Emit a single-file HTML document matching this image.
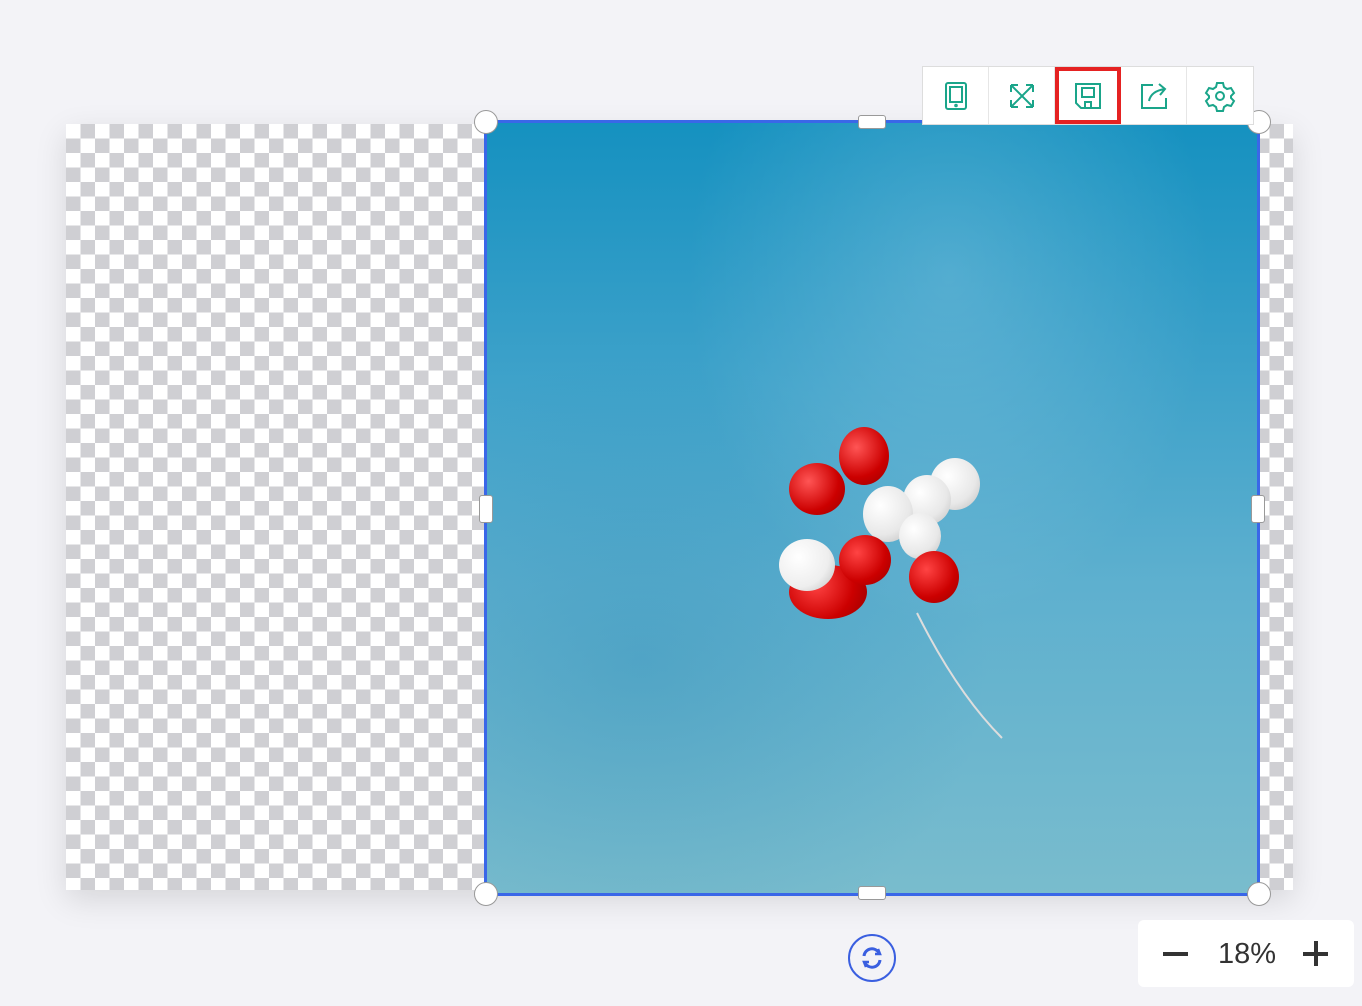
<!DOCTYPE html>
<html><head><meta charset="utf-8"><style>
body{margin:0;width:1362px;height:1006px;background:#f3f3f7;position:relative;overflow:hidden;font-family:"Liberation Sans",sans-serif}
.checker{position:absolute;left:66px;top:124px;width:1227px;height:766px;
background-color:#fff;background-image:linear-gradient(45deg,#cfcfd3 25%,transparent 25%,transparent 75%,#cfcfd3 75%),linear-gradient(45deg,#cfcfd3 25%,transparent 25%,transparent 75%,#cfcfd3 75%);
background-size:29px 29px;background-position:0 0,14.5px 14.5px;box-shadow:0 10px 30px rgba(0,0,0,.12)}
.img{position:absolute;left:484px;top:120px;width:770px;height:770px;border:3px solid #3a67e8;overflow:hidden;
background:linear-gradient(180deg,#1591c0 0%,#3aa0c9 30%,#5eb0cf 60%,#79bccd 100%)}
.h{position:absolute;background:#fff;border:1px solid #999;}
.c{width:22px;height:22px;border-radius:50%}
.tb{position:absolute;left:922px;top:66px;width:330px;height:57px;background:#fff;border:1px solid #ddd;display:flex}
.tb div{width:66px;height:57px;border-right:1px solid #e6e6e6;display:flex;align-items:center;justify-content:center;box-sizing:border-box}
.b{position:absolute;border-radius:50%}
</style></head><body>
<div class="checker"></div>
<div class="img">
<div style="position:absolute;left:0;top:0;width:100%;height:100%;background:radial-gradient(ellipse at 60% 20%,rgba(255,255,255,.18),transparent 40%),radial-gradient(ellipse at 20% 70%,rgba(20,120,170,.25),transparent 40%)"></div>
<svg width="770" height="770" style="position:absolute;left:0;top:0"><path d="M430 490 Q470 570 515 615" stroke="#ddd" stroke-width="2" fill="none"/></svg>
<div class="b" style="left:302px;top:340px;width:56px;height:52px;background:radial-gradient(circle at 35% 35%,#f55,#c00 60%,#900)"></div>
<div class="b" style="left:352px;top:304px;width:50px;height:58px;background:radial-gradient(circle at 35% 35%,#f55,#c00 60%,#900)"></div>
<div class="b" style="left:443px;top:335px;width:50px;height:52px;background:radial-gradient(circle at 35% 35%,#fff,#e8e8e8 60%,#bbb)"></div>
<div class="b" style="left:416px;top:352px;width:48px;height:50px;background:radial-gradient(circle at 35% 35%,#fff,#e8e8e8 60%,#bbb)"></div>
<div class="b" style="left:376px;top:363px;width:50px;height:56px;background:radial-gradient(circle at 35% 35%,#fff,#e8e8e8 60%,#bbb)"></div>
<div class="b" style="left:412px;top:390px;width:42px;height:46px;background:radial-gradient(circle at 35% 35%,#fff,#e8e8e8 60%,#bbb)"></div>
<div class="b" style="left:302px;top:442px;width:78px;height:54px;background:radial-gradient(circle at 35% 35%,#f44,#c00 60%,#900)"></div>
<div class="b" style="left:352px;top:412px;width:52px;height:50px;background:radial-gradient(circle at 35% 35%,#f44,#c00 60%,#900)"></div>
<div class="b" style="left:422px;top:428px;width:50px;height:52px;background:radial-gradient(circle at 35% 35%,#f44,#c00 60%,#900)"></div>
<div class="b" style="left:292px;top:416px;width:56px;height:52px;background:radial-gradient(circle at 35% 35%,#fff,#eee 60%,#bbb)"></div>
</div>
<div class="h c" style="left:474px;top:110px"></div><div class="h c" style="left:1247px;top:110px"></div>
<div class="h c" style="left:474px;top:882px"></div><div class="h c" style="left:1247px;top:882px"></div>
<div class="h" style="left:858px;top:115px;width:26px;height:12px;border-radius:3px"></div>
<div class="h" style="left:858px;top:886px;width:26px;height:12px;border-radius:3px"></div>
<div class="h" style="left:479px;top:495px;width:12px;height:26px;border-radius:3px"></div>
<div class="h" style="left:1251px;top:495px;width:12px;height:26px;border-radius:3px"></div>
<div class="tb">
<div><svg width="28" height="30" fill="none" stroke="#1aa58a" stroke-width="2"><rect x="4" y="2" width="20" height="26" rx="2"/><rect x="8" y="6" width="12" height="15"/><circle cx="14" cy="24.5" r=".8"/></svg></div>
<div><svg width="30" height="30" fill="none" stroke="#1aa58a" stroke-width="2"><path d="M4 4L26 26M26 4L4 26M4 4h7M4 4v7M26 4h-7M26 4v7M4 26h7M4 26v-7M26 26h-7M26 26v-7"/></svg></div>
<div style="border:4px solid #e52222"><svg width="30" height="30" fill="none" stroke="#1aa58a" stroke-width="2"><path d="M3 3h24v24H8L3 22z"/><rect x="9" y="7" width="12" height="9"/><rect x="12" y="21" width="6" height="6"/></svg></div>
<div><svg width="30" height="30" fill="none" stroke="#1aa58a" stroke-width="2"><path d="M14 4H3v23h24V17M10 20Q12 10 26 8M20 3l6 5-5 6"/></svg></div>
<div style="border:none"><svg width="32" height="32" fill="none" stroke="#1aa58a" stroke-width="2"><path d="M13 3h6l1 4 3 2 4-1 3 5-3 3v2l3 3-3 5-4-1-3 2-1 4h-6l-1-4-3-2-4 1-3-5 3-3v-2l-3-3 3-5 4 1 3-2z"/><circle cx="16" cy="16" r="4"/></svg></div>
</div>
<svg style="position:absolute;left:848px;top:934px" width="48" height="48" fill="none" stroke="#3a5fe0" stroke-width="2"><circle cx="24" cy="24" r="23"/><path d="M16 22a8 8 0 0 1 15-3M32 26a8 8 0 0 1-15 3" stroke-width="3"/><path d="M30 15l2 5-5 0M18 33l-2-5 5 0" stroke-width="2.5"/></svg>
<div style="position:absolute;left:1138px;top:920px;width:216px;height:67px;background:#fff;border-radius:6px">
<div style="position:absolute;left:25px;top:32px;width:25px;height:4px;background:#333"></div>
<div style="position:absolute;left:80px;top:18px;font-size:29px;color:#333">18%</div>
<div style="position:absolute;left:165px;top:32px;width:25px;height:4px;background:#333"></div>
<div style="position:absolute;left:175.5px;top:21px;width:4px;height:25px;background:#333"></div>
</div>
</body></html>
